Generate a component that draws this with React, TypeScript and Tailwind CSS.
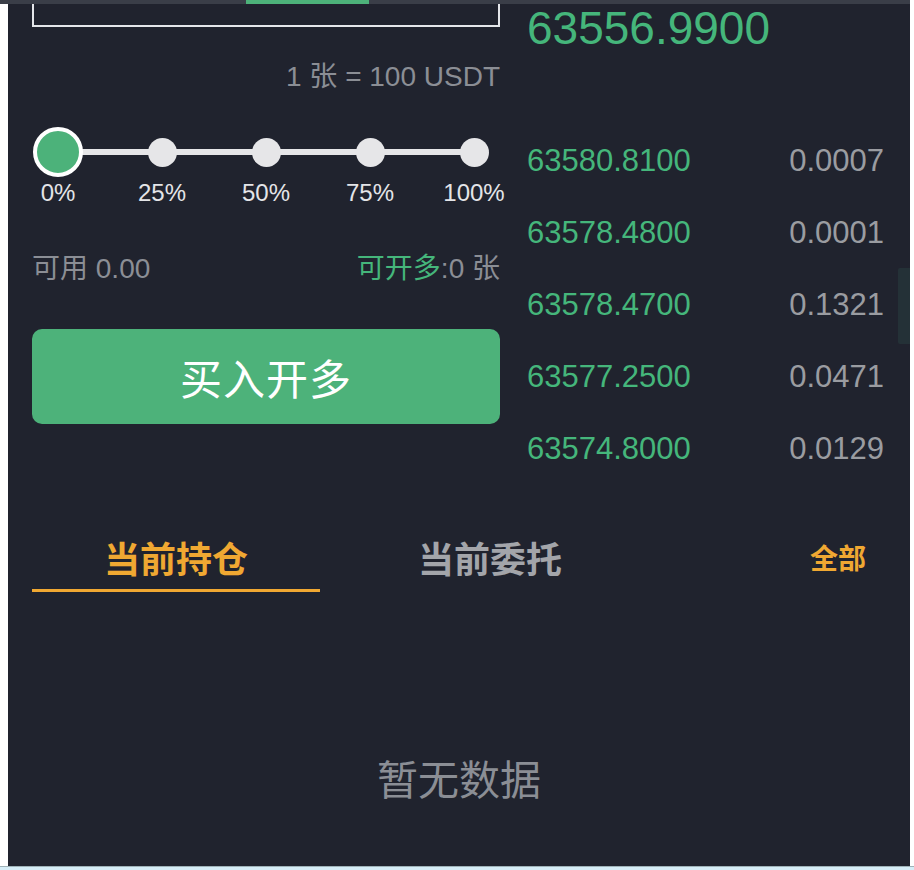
import React from "react";

const latin = { fontFamily: '"Liberation Sans", "Noto Sans CJK SC", sans-serif' };

const asks = [
  ["63580.8100", "0.0007"],
  ["63578.4800", "0.0001"],
  ["63578.4700", "0.1321"],
  ["63577.2500", "0.0471"],
  ["63574.8000", "0.0129"],
];

const marks = ["0%", "25%", "50%", "75%", "100%"];

export default function App() {
  return (
    <div className="w-[914px] h-[870px] bg-white flex flex-col overflow-hidden" style={latin}>
      <div className="h-[4px] w-[910px] bg-[#3a3e48] flex shrink-0">
        <div className="w-[246px]" />
        <div className="w-[123px] bg-[#4db27a]" />
      </div>
      <div className="flex flex-1 min-h-0">
        <div className="w-[8px] bg-white shrink-0" />
        <div className="relative w-[902px] bg-[#20232e] flex flex-col pl-[24px] pr-[26px]">
          <div className="absolute right-0 top-[264px] w-[12px] h-[76px] bg-[#243137] rounded-l-[2px]" />
          <div className="flex">
            <div className="w-[468px] flex flex-col">
              <div className="h-[23px] border-x-2 border-b-2 border-[#e4e6ea]" />
              <div className="mt-[34px] h-[32px] leading-[32px] text-right text-[28px] text-[#8b8e95]">
                1 张 = 100 USDT
              </div>
              <div className="mt-[34px] relative h-[50px]">
                <div className="absolute left-[26px] right-[26px] top-[22px] h-[6px] bg-[#e6e6e8]" />
                <div className="relative flex justify-between items-center h-[50px]">
                  {marks.map((m, i) => (
                    <div key={m} className="w-[52px] flex justify-center">
                      {i === 0 ? (
                        <div className="w-[50px] h-[50px] rounded-full bg-[#4cb27a] border-[4px] border-white" />
                      ) : (
                        <div className="w-[29px] h-[29px] rounded-full bg-[#e6e6e8]" />
                      )}
                    </div>
                  ))}
                </div>
              </div>
              <div className="mt-[2px] flex justify-between h-[28px] leading-[28px]">
                {marks.map((m) => (
                  <div key={m} className="w-[52px] flex justify-center">
                    <span className="whitespace-nowrap text-[24px] text-[#e4e5e8]">{m}</span>
                  </div>
                ))}
              </div>
              <div className="mt-[46px] h-[32px] leading-[32px] flex justify-between text-[28px]">
                <span className="text-[#8b8e95]">可用 0.00</span>
                <span className="text-[#8b8e95]">
                  <span className="text-[#45b67b]">可开多</span>:0 张
                </span>
              </div>
              <div className="mt-[44px] h-[95px] rounded-[10px] bg-[#4db27a] flex items-center justify-center">
                <span className="text-[42px] text-white tracking-[1px]" style={{ fontFamily: '"Noto Sans CJK SC", sans-serif' }}>
                  买入开多
                </span>
              </div>
            </div>
            <div className="flex-1 ml-[27px] flex flex-col">
              <div className="h-[48px] leading-[48px] text-[46px] text-[#45b67b]">63556.9900</div>
              <div className="mt-[73px] flex flex-col">
                {asks.map(([p, q]) => (
                  <div key={p} className="h-[72px] flex items-center justify-between text-[31px]">
                    <span className="text-[#45b67b]">{p}</span>
                    <span className="text-[#9a9ca1]">{q}</span>
                  </div>
                ))}
              </div>
            </div>
          </div>
          <div
            className="mt-[52px] flex items-start"
            style={{ fontFamily: '"Noto Sans CJK SC", sans-serif' }}
          >
            <div className="w-[288px] flex flex-col items-center">
              <span className="h-[40px] leading-[40px] text-[36px] font-bold text-[#f0a832]">当前持仓</span>
              <div className="mt-[12px] h-[3px] w-full bg-[#f0a832]" />
            </div>
            <div className="w-[288px] ml-[26px] flex flex-col items-center">
              <span className="h-[40px] leading-[40px] text-[36px] font-bold text-[#a3a5aa]">当前委托</span>
            </div>
            <span className="ml-auto mr-[18px] h-[40px] leading-[40px] text-[28px] font-bold text-[#f0a832]">全部</span>
          </div>
          <div
            className="mt-[161px] -ml-[24px] -mr-[26px] h-[48px] leading-[48px] text-center text-[41px] text-[#8b8e95]"
            style={{ fontFamily: '"Noto Sans CJK SC", sans-serif' }}
          >
            暂无数据
          </div>
        </div>
        <div className="flex-1 bg-white" />
      </div>
      <div className="h-[1px] bg-[#9fb2b8] shrink-0" />
      <div className="h-[3px] bg-[#d6edf7] shrink-0" />
    </div>
  );
}
